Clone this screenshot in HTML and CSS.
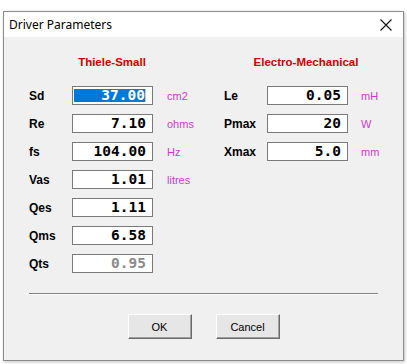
FILE: index.html
```html
<!DOCTYPE html>
<html lang="en">
<head>
  <meta charset="UTF-8" />
  <title>Driver Parameters</title>
  <link rel="stylesheet" href="styles.css">
</head>
<body>
  <div class="window">
    <div class="titlebar">
      <span class="title">Driver Parameters</span>
      <svg class="close" width="12" height="12" viewBox="0 0 12 12">
        <path d="M0.5 0.5 L11.5 11.5 M11.5 0.5 L0.5 11.5" stroke="#111" stroke-width="1.1" fill="none"/>
      </svg>
    </div>

    <div class="content">
      <div class="columns">
        <div class="column left">
          <div class="heading">Thiele-Small</div>
          <div class="row"><span class="label">Sd</span><span class="field"><span class="selected">37.00</span></span><span class="unit">cm2</span></div>
          <div class="row"><span class="label">Re</span><span class="field">7.10</span><span class="unit">ohms</span></div>
          <div class="row"><span class="label">fs</span><span class="field">104.00</span><span class="unit">Hz</span></div>
          <div class="row"><span class="label">Vas</span><span class="field">1.01</span><span class="unit">litres</span></div>
          <div class="row"><span class="label">Qes</span><span class="field">1.11</span></div>
          <div class="row"><span class="label">Qms</span><span class="field">6.58</span></div>
          <div class="row"><span class="label">Qts</span><span class="field disabled">0.95</span></div>
        </div>
        <div class="column right">
          <div class="heading">Electro-Mechanical</div>
          <div class="row"><span class="label">Le</span><span class="field">0.05</span><span class="unit">mH</span></div>
          <div class="row"><span class="label">Pmax</span><span class="field">20</span><span class="unit">W</span></div>
          <div class="row"><span class="label">Xmax</span><span class="field">5.0</span><span class="unit">mm</span></div>
        </div>
      </div>

      <div class="separator"></div>

      <div class="buttons">
        <button class="btn">OK</button>
        <button class="btn">Cancel</button>
      </div>
    </div>
  </div>
</body>
</html>
```

FILE: styles.css
```css
* {
  box-sizing: border-box;
  margin: 0;
  padding: 0;
}

body {
  background: #fff;
  font-family: 'Liberation Sans', Arial, sans-serif;
  width: 407px;
  height: 364px;
  overflow: hidden;
}

.window {
  margin: 11px 0 0 3px;
  width: 401px;
  height: 350px;
  border: 1px solid #8c8c8c;
  background: #f0f0f0;
  box-shadow: 1px 1px 3px rgba(0, 0, 0, 0.25);
}

.titlebar {
  height: 25px;
  background: #fff;
  display: flex;
  align-items: center;
  justify-content: space-between;
  padding: 0 11px 0 5px;
}

.title {
  font-family: 'Noto Sans', 'Open Sans', sans-serif;
  font-size: 12px;
  color: #000;
}

.close {
  display: block;
  margin-top: 0;
}

.content {
  padding: 18px 0 0 25px;
}

.columns {
  display: flex;
  gap: 29px;
}

.column {
  display: flex;
  flex-direction: column;
  gap: 9px;
}

.column.left {
  width: 166px;
}

.column.right {
  width: 164px;
}

.heading {
  font-size: 11.5px;
  font-weight: bold;
  color: #cc0000;
  text-align: center;
  line-height: 14px;
  margin-bottom: 8px;
}

.row {
  display: flex;
  align-items: center;
  height: 19px;
}

.label {
  width: 43px;
  font-size: 12px;
  font-weight: bold;
  color: #000;
}

.field {
  width: 81px;
  height: 19px;
  border: 1px solid #7a7a7a;
  background: #fff;
  display: flex;
  align-items: center;
  justify-content: flex-end;
  padding: 0 6px 0 1px;
  font-family: 'DejaVu Sans Mono', monospace;
  font-weight: bold;
  font-size: 14.5px;
  line-height: 17px;
  color: #000;
}

.field.disabled {
  color: #8a8a8a;
}

.selected {
  display: block;
  width: 100%;
  height: 13px;
  line-height: 13px;
  text-align: right;
  background: #0078d7;
  color: #fff;
  border-right: 1px solid #d6c8a0;
}

.unit {
  margin-left: 14px;
  font-size: 11px;
  color: #c83cc8;
}

.right .unit {
  margin-left: 13px;
}

.separator {
  width: 349px;
  margin-top: 20px;
  border-top: 1px solid #808080;
  border-bottom: 1px solid #fff;
}

.buttons {
  display: flex;
  justify-content: center;
  gap: 24px;
  margin: 19px 0 0 -25px;
}

.btn {
  width: 64px;
  height: 25px;
  background: #e6e6e6;
  border: 1px solid;
  border-color: #fff #696969 #696969 #fff;
  box-shadow: inset -1px -1px 0 #a0a0a0;
  font-family: 'Liberation Sans', Arial, sans-serif;
  font-size: 11px;
  color: #000;
}
```
